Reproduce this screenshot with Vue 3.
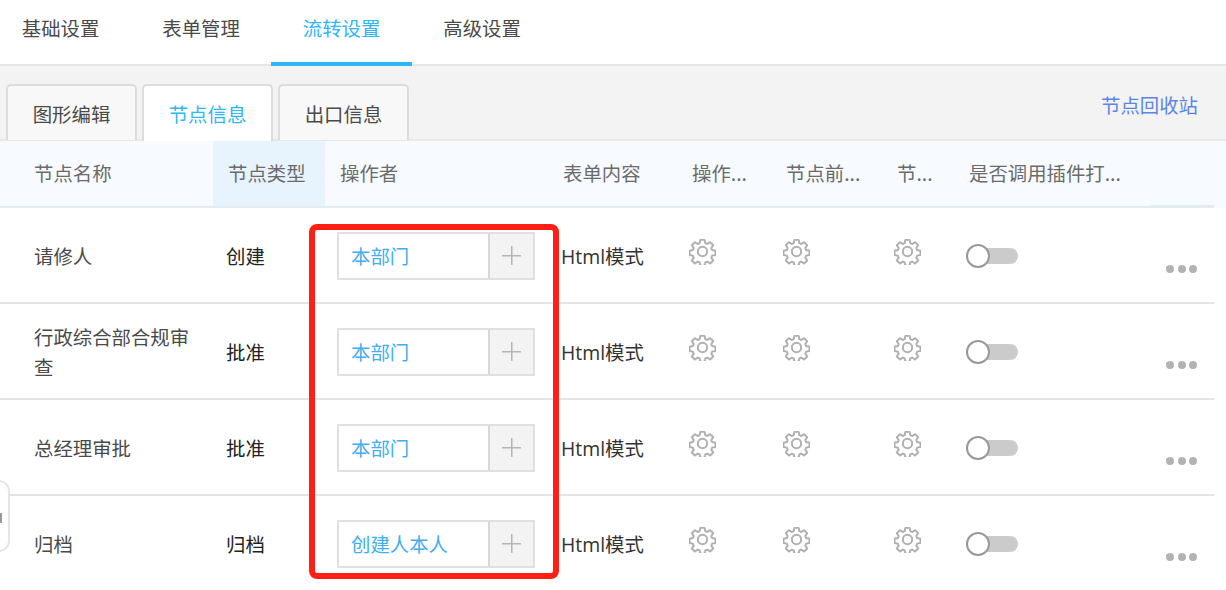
<script setup>
const topTabs = ['基础设置', '表单管理', '流转设置', '高级设置']
const subTabs = ['图形编辑', '节点信息', '出口信息']
const headers = [
  { text: '节点名称', cls: 'c-name' },
  { text: '节点类型', cls: 'c-type active' },
  { text: '操作者', cls: 'c-op' },
  { text: '表单内容', cls: 'c-form' },
  { text: '操作...', cls: 'c-a' },
  { text: '节点前...', cls: 'c-b' },
  { text: '节...', cls: 'c-c' },
  { text: '是否调用插件打...', cls: 'c-d' },
  { text: '', cls: 'c-e' }
]
const rows = [
  { name: '请修人', type: '创建', op: '本部门' },
  { name: '行政综合部合规审查', type: '批准', op: '本部门' },
  { name: '总经理审批', type: '批准', op: '本部门' },
  { name: '归档', type: '归档', op: '创建人本人' }
]
const gears = ['c-a', 'c-b', 'c-c']
</script>

<template>
  <div class="page">
    <nav class="top">
      <a v-for="(t, i) in topTabs" :key="t" class="top-tab" :class="{ on: i === 2 }">{{ t }}</a>
    </nav>
    <div class="band">
      <div class="subs">
        <a v-for="(t, i) in subTabs" :key="t" class="sub" :class="{ on: i === 1 }">{{ t }}</a>
      </div>
      <a class="bin">节点回收站</a>
    </div>
    <div class="table">
      <div class="thead">
        <div v-for="h in headers" :key="h.cls" class="th" :class="h.cls">{{ h.text }}</div>
      </div>
      <div v-for="r in rows" :key="r.name" class="tr">
        <div class="td c-name name">{{ r.name }}</div>
        <div class="td c-type kind">{{ r.type }}</div>
        <div class="td op-cell">
          <div class="picker">
            <span class="value">{{ r.op }}</span>
            <span class="plus"><i></i></span>
          </div>
        </div>
        <div class="td c-form form">Html模式</div>
        <div v-for="g in gears" :key="g" class="td gear-cell" :class="g">
          <svg class="gear" viewBox="0 0 26 26" width="27" height="27" fill="none" stroke="#b0b0b0" stroke-width="1.9" stroke-linejoin="round">
            <path d="M10.9 1.800h4.200l.6 3.200 1.900.8 2.700-1.800 3 3-1.800 2.700.8 1.900 3.200.6v4.200l-3.200.6-.8 1.900 1.800 2.700-3 3-2.700-1.800-1.900.8-.6 3.200h-4.200l-.6-3.200-1.900-.8-2.700 1.800-3-3 1.800-2.700-.8-1.900-3.200-.6v-4.200l3.200-.6.8-1.900-1.800-2.700 3-3 2.700 1.800 1.900-.8z"/>
            <circle cx="13" cy="13" r="4.500"/>
          </svg>
        </div>
        <div class="td c-d toggle-cell"><span class="toggle"><b></b></span></div>
        <div class="td c-e more"><i></i><i></i><i></i></div>
      </div>
    </div>
    <div class="handle"><i></i></div>
    <div class="mark"></div>
  </div>
</template>

<style>
html, body { margin: 0; background: #fff; }
</style>

<style scoped>
.page {
  position: relative;
  width: 1226px;
  height: 590px;
  overflow: hidden;
  background: #fff;
  font-family: "Noto Sans CJK SC", "Noto Sans", sans-serif;
  font-size: 19.4px;
  color: #555;
}
.top {
  display: flex;
  height: 64px;
  margin-left: -9.700px;
  border-bottom: 2px solid #e6e6e6;
}
.top-tab {
  box-sizing: border-box;
  height: 66px;
  width: 140.500px;
  padding-top: 10px;
  text-align: center;
  line-height: 36px;
  color: #4a4a4a;
}
.top-tab.on { color: #2db7f5; border-bottom: 4px solid #2db7f5; }
.band {
  display: flex;
  justify-content: space-between;
  height: 73px;
  background: #f3f3f3;
  border-bottom: 2px solid #e8e8e8;
}
.subs { display: flex; align-items: flex-start; gap: 5px; padding: 18px 0 0 6px; }
.sub {
  box-sizing: border-box;
  width: 131px;
  height: 56px;
  border: 2px solid #dcdcdc;
  border-bottom: 0;
  border-radius: 5px 5px 0 0;
  background: #f8f8f8;
  text-align: center;
  line-height: 56px;
  color: #4a4a4a;
}
.sub.on { height: 57px; background: #fff; color: #2db7f5; position: relative; z-index: 1; }
.bin { padding: 21px 28px 0 0; line-height: 36px; color: #5b86e5; }
.table { width: 1226px; }
.thead {
  display: grid;
  grid-template-columns: 213px 112px 223px 130px 94px 111px 72px 196px 63px;
  height: 67px;
  background: #f7fbff;
}
.th {
  box-sizing: border-box;
  padding-left: 14px;
  line-height: 63px;
  color: #6b6b6b;
  white-space: nowrap;
  border-bottom: 2px solid #e4ecf3;
}
.th.c-name { padding-left: 34px; }
.th.c-type, .th.c-op, .th.c-form { padding-left: 15px; }
.th.active { background: #e8f4fd; }
.th.c-e { border-bottom-width: 3px; }
.tr {
  display: grid;
  grid-template-columns: 213px 112px 223px 130px 94px 111px 72px 196px 63px;
  height: 92px;
  padding-top: 2px;
  width: 1214px;
  border-bottom: 2px solid #e4e4e4;
}
.td { display: flex; align-items: center; min-width: 0; }
.name { padding: 0 20px 0 34px; line-height: 30px; color: #4a4a4a; }
.kind { padding: 0 0 2px 13px; color: #222; }
.form { padding: 0 0 2px 13px; color: #333; font-family: "Open Sans", "Noto Sans CJK SC", sans-serif; }
.op-cell { padding-left: 12px; }
.picker { display: flex; width: 198px; height: 48px; box-sizing: border-box; border: 2px solid #e0e0e0; }
.value { flex: 1; padding-left: 12px; line-height: 44px; color: #41aef0; }
.plus { position: relative; width: 43px; background: #f3f3f3; border-left: 2px solid #d8d8d8; }
.plus i { position: absolute; left: 12px; top: 12px; width: 19px; height: 19px;
  background: linear-gradient(#b5b5b5, #b5b5b5) center / 19px 1.500px no-repeat,
              linear-gradient(#b5b5b5, #b5b5b5) center / 1.500px 19px no-repeat; }
.gear-cell { padding: 0 0 10px 11px; }
.toggle-cell { padding-left: 11px; }
.toggle { position: relative; display: block; width: 52px; height: 16px; background: #cbcbcb; border-radius: 8px; }
.toggle b { position: absolute; left: 0; top: -4px; width: 24px; height: 24px; box-sizing: border-box; border: 2px solid #999; border-radius: 50%; background: #fff; }
.more { gap: 3.500px; padding: 25px 0 0 15px; }
.more i { width: 8px; height: 8px; border-radius: 50%; background: #b3b3b3; }
.handle {
  position: absolute;
  left: -12px;
  top: 480px;
  width: 22px;
  height: 72px;
  box-sizing: border-box;
  border: 2px solid #e6e6e6;
  border-radius: 11px;
  background: #fff;
}
.handle i { position: absolute; right: 6px; top: 31px; width: 2px; height: 10px; background: #999; }
.mark {
  position: absolute;
  left: 309px;
  top: 224px;
  width: 250px;
  height: 355px;
  box-sizing: border-box;
  border: 6px solid #ff2015;
  border-radius: 8px;
}
</style>
